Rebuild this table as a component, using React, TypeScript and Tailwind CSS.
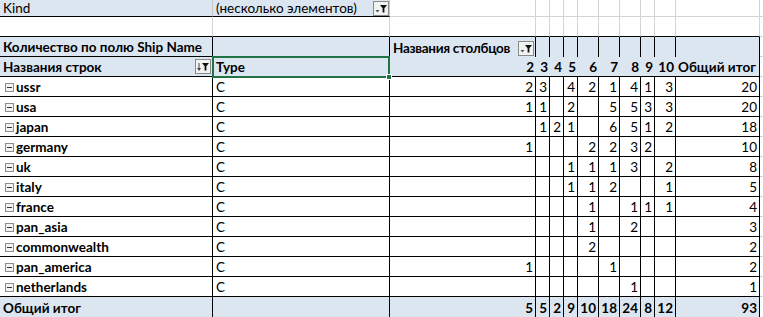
import React from "react";

const F = "font-['Lato',_'Liberation_Sans',_sans-serif]";

type Row = { name: string; vals: (number | null)[]; total: number };

const rows: Row[] = [
  { name: "ussr", vals: [2, 3, null, 4, 2, 1, 4, 1, 3], total: 20 },
  { name: "usa", vals: [1, 1, null, 2, null, 5, 5, 3, 3], total: 20 },
  { name: "japan", vals: [null, 1, 2, 1, null, 6, 5, 1, 2], total: 18 },
  { name: "germany", vals: [1, null, null, null, 2, 2, 3, 2, null], total: 10 },
  { name: "uk", vals: [null, null, null, 1, 1, 1, 3, null, 2], total: 8 },
  { name: "italy", vals: [null, null, null, 1, 1, 2, null, null, 1], total: 5 },
  { name: "france", vals: [null, null, null, null, 1, null, 1, 1, 1], total: 4 },
  { name: "pan_asia", vals: [null, null, null, null, 1, null, 2, null, null], total: 3 },
  { name: "commonwealth", vals: [null, null, null, null, 2, null, null, null, null], total: 2 },
  { name: "pan_america", vals: [1, null, null, null, null, 1, null, null, null], total: 2 },
  { name: "netherlands", vals: [null, null, null, null, null, null, 1, null, null], total: 1 },
];

const headers = [2, 3, 4, 5, 6, 7, 8, 9, 10];
const totals = [5, 5, 2, 9, 10, 18, 24, 8, 12];

function Cell({ className = "", children }: { className?: string; children?: React.ReactNode }) {
  return (
    <div className={"flex items-end overflow-hidden whitespace-nowrap px-[3px] pb-[1px] leading-[16px] " + className}>
      {children}
    </div>
  );
}

function FilterBtn({ sort = false }: { sort?: boolean }) {
  return (
    <div className="w-[16px] h-[15px] border border-[#8a8a8a] bg-[#f2f2f2] shrink-0">
      <svg width="14" height="13" viewBox="0 0 14 13">
        {sort ? (
          <g fill="#444">
            <rect x="2.5" y="3" width="1" height="6" />
            <polygon points="1,8 5,8 3,11" />
          </g>
        ) : (
          <polygon points="1.5,8 5.5,8 3.5,10.5" fill="#555" />
        )}
        <path d="M6 3h7l-2.6 3.2v4.3h-1.8v-4.3z" fill="#111" />
      </svg>
    </div>
  );
}

function Expander() {
  return (
    <div className="w-[9px] h-[9px] border border-[#8c8c8c] bg-[#f4f4f4] flex items-center justify-center mr-[2px] mb-[3px] shrink-0">
      <div className="w-[5px] h-[1px] bg-[#333]" />
    </div>
  );
}

export default function App() {
  const blue = "bg-[#dce6f1]";
  return (
    <div className={"relative w-[763px] h-[317px] overflow-hidden bg-white text-[13.5px] text-black " + F}>
      <div className="grid grid-cols-[213px_177px_146px_14px_14px_14px_21px_21px_21px_14px_21px_84px_1fr] grid-rows-[17px_repeat(15,20px)]">
        {/* Row 1 */}
        <Cell className={blue + " border-r border-b border-r-[#c6c6c6] border-b-black !pb-0 !leading-[15px]"}>Kind</Cell>
        <Cell className={blue + " border-r border-b border-r-[#c6c6c6] border-b-black justify-between !pr-0 !pb-0 !leading-[15px]"}>
          <span>(несколько элементов)</span>
          <div><FilterBtn /></div>
        </Cell>
        {Array.from({ length: 10 }).map((_, i) => (
          <Cell key={"r1" + i} className="border-r border-b border-[#d4d4d4]" />
        ))}
        <Cell className="border-b border-[#d4d4d4]" />

        {/* Row 2 */}
        {Array.from({ length: 12 }).map((_, i) => (
          <Cell key={"r2" + i} className="border-r border-b border-r-[#d4d4d4] border-b-black" />
        ))}
        <Cell className="border-b border-[#d4d4d4]" />

        {/* Row 3 */}
        <Cell className={blue + " border-r border-b border-black font-bold"}>Количество по полю Ship Name</Cell>
        <Cell className={blue + " border-r border-b border-black"} />
        <Cell className={blue + " border-r border-black font-bold justify-between !pb-0 !pr-[1px]"}>
          <span className="pb-[1px] tracking-[-0.3px]">Названия столбцов</span>
          <div className="mb-[1px]"><FilterBtn /></div>
        </Cell>
        {Array.from({ length: 9 }).map((_, i) => (
          <Cell key={"r3" + i} className={blue + " border-r border-black"} />
        ))}
        <Cell className="border-b border-[#d4d4d4]" />

        {/* Row 4 */}
        <Cell className={blue + " border-r border-b border-black font-bold justify-between !pb-0 !pr-[1px]"}>
          <span className="pb-[1px]">Названия строк</span>
          <div className="mb-[2px]"><FilterBtn sort /></div>
        </Cell>
        <Cell className={blue + " border-r border-b border-black font-bold"}>Type</Cell>
        {headers.map((h) => (
          <Cell key={"h" + h} className={blue + " border-b border-black font-bold justify-end !px-[2px]"}>
            {h}
          </Cell>
        ))}
        <Cell className={blue + " border-r border-b border-black font-bold !px-[2px]"}>Общий итог</Cell>
        <Cell className="border-b border-[#d4d4d4]" />

        {/* Data rows */}
        {rows.map((r) => (
          <React.Fragment key={r.name}>
            <Cell className="border-r border-b border-black font-bold !pl-[5px]">
              <Expander />
              {r.name}
            </Cell>
            <Cell className="border-r border-b border-black">C</Cell>
            {r.vals.map((v, i) => (
              <Cell key={i} className="border-r border-b border-black justify-end !px-[2px]">
                {v ?? ""}
              </Cell>
            ))}
            <Cell className="border-r border-b border-black justify-end !px-[2px]">{r.total}</Cell>
            <Cell className="border-b border-[#d4d4d4]" />
          </React.Fragment>
        ))}

        {/* Total row */}
        <Cell className={blue + " border-r border-black font-bold"}>Общий итог</Cell>
        <Cell className={blue + " border-r border-black"} />
        {totals.map((t, i) => (
          <Cell key={"t" + i} className={blue + " border-r border-black font-bold justify-end !px-[2px]"}>
            {t}
          </Cell>
        ))}
        <Cell className={blue + " border-r border-black font-bold justify-end !px-[2px]"}>93</Cell>
        <Cell />
      </div>

      {/* selection overlay */}
      <div className="absolute left-[212px] top-[56px] w-[178px] h-[22px] border-2 border-[#217346] pointer-events-none" />
      <div className="absolute left-[386px] top-[74px] w-[6px] h-[6px] bg-[#217346] border border-white pointer-events-none" />
    </div>
  );
}
